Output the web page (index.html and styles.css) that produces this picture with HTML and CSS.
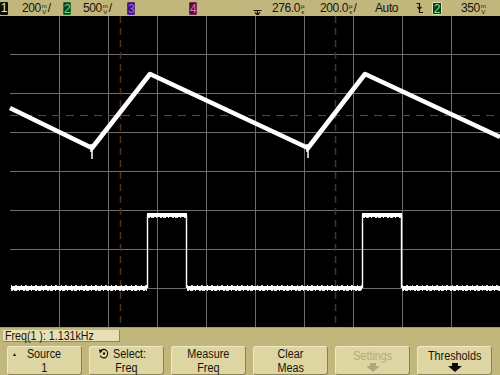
FILE: index.html
```html
<!DOCTYPE html>
<html>
<head>
<meta charset="utf-8">
<link rel="stylesheet" href="styles.css">
</head>
<body>
<div class="scope">
  <div class="topbar">
    <span class="cell"><span class="ch ch1">1</span></span>
    <span class="cell txt"><span class="sq">200</span><span class="unit"><i>m</i><i>V</i></span><span class="sq">/</span></span>
    <span class="cell"><span class="ch ch2">2</span></span>
    <span class="cell txt"><span class="sq">500</span><span class="unit"><i>m</i><i>V</i></span><span class="sq">/</span></span>
    <span class="cell"><span class="ch ch3">3</span></span>
    <span class="cell"><span class="ch ch4">4</span></span>
    <span class="cell">
      <svg class="ico trigpos" width="9" height="14" viewBox="0 0 9 14"><path d="M0.5 9.5 H8.5 M4.5 9.5 V14 M2 11.5 L4.5 14 L7 11.5" /></svg>
    </span>
    <span class="cell txt"><span class="sq">276.0</span><span class="unit"><i>µ</i><i>s</i></span></span>
    <span class="cell txt"><span class="sq">200.0</span><span class="unit"><i>µ</i><i>s</i></span><span class="sq">/</span></span>
    <span class="cell txt"><span class="sq">Auto</span></span>
    <span class="cell">
      <svg class="ico slope" width="8" height="12" viewBox="0 0 8 12"><path d="M0.5 1.5 H3.5 V10.5 H7 M1.5 5 L3.5 7 L5.5 5" /></svg>
    </span>
    <span class="cell"><span class="ch ch2b">2</span></span>
    <span class="cell txt"><span class="sq">350</span><span class="unit"><i>m</i><i>V</i></span></span>
  </div>

  <div class="screen">
    <svg width="500" height="312" viewBox="0 0 500 312">
      <g class="grid">
        <path d="M10 38.5 H500 M10 77.5 H500 M10 116.5 H500 M10 155.5 H500 M10 194.5 H500 M10 233.5 H500 M10 272.5 H500" />
        <path d="M59.5 0 V311 M108.5 0 V311 M157.5 0 V311 M206.5 0 V311 M255.5 0 V311 M304.5 0 V311 M353.5 0 V311 M402.5 0 V311 M451.5 0 V311" />
      </g>
      <path class="edge" d="M0 311.5 H500" />
      <path class="cursor-v" d="M120.5 0 V311 M335.5 0 V311" />
      <path class="cursor-h" d="M10 99.5 H500" />
      <path class="ch1trace" d="M10 92 L92 132 L150 58 L308 132 L365 58 L500 121" />
      <path class="spike" d="M92 131 V143 M308 131 V142 M91 128 V136 M307 128 V136" />
      <path class="ch2flat" d="M11 272 H147 M147 199 H187 M187 272 H362 M362 199 H402 M402 272 H500" />
      <path class="ch2edge" d="M147.5 199 V272 M186.5 199 V272 M362.5 199 V272 M401.5 199 V272" />
      <path class="ch2noise" d="M11 274.5 H147 M187 274.5 H362 M402 274.5 H500 M148 201.5 H187 M363 201.5 H402" />
      <path class="ch2noise2" d="M11 269.5 H147 M187 269.5 H362 M402 269.5 H500" />
    </svg>
  </div>

  <div class="softbar">
    <div class="readout"><span class="rq">Freq(1 ): 1.131kHz</span></div>
    <div class="keys">
      <div class="key">
        <span class="mark">&#9650;</span>
        <span class="kl">Source</span><span class="kl">1</span>
      </div>
      <div class="key">
        <span class="kl line1">
          <svg class="ico sel" width="12" height="11" viewBox="0 0 12 11"><path d="M2.2 3.2 A4.3 4.3 0 1 1 1.8 7.4" /><path class="fill" d="M0.2 1.2 L4.6 2.4 L1.4 5.4 Z" /><circle class="fill" cx="6" cy="5.5" r="1.3" /></svg>
          Select:</span><span class="kl">Freq</span>
      </div>
      <div class="key"><span class="kl">Measure</span><span class="kl">Freq</span></div>
      <div class="key"><span class="kl">Clear</span><span class="kl">Meas</span></div>
      <div class="key off"><span class="kl">Settings</span>
        <svg class="arrow" width="16" height="9" viewBox="0 0 16 9"><path d="M5 0 H11 V3 H15 L8 9 L1 3 H5 Z" /></svg>
      </div>
      <div class="key"><span class="kl">Thresholds</span>
        <svg class="arrow" width="16" height="9" viewBox="0 0 16 9"><path d="M5 0 H11 V3 H15 L8 9 L1 3 H5 Z" /></svg>
      </div>
    </div>
  </div>
</div>
</body>
</html>
```

FILE: styles.css
```css
html, body {
  margin: 0;
  padding: 0;
  background: #000;
}

.scope {
  width: 500px;
  height: 375px;
  display: flex;
  flex-direction: column;
  font-family: "Liberation Sans", Arial, sans-serif;
  color: #16140a;
  overflow: hidden;
}

.topbar {
  height: 16px;
  background: #c1b67c;
  display: grid;
  grid-template-columns: 22px 41px 20px 44px 62px 62px 21px 48px 55px 39px 18px 29px 39px;
  align-items: center;
  font-size: 13px;
  line-height: 14px;
}

.cell {
  display: flex;
  align-items: center;
  height: 16px;
  white-space: nowrap;
}

.sq {
  display: inline-block;
  white-space: nowrap;
  font-size: 12px;
  letter-spacing: -0.4px;
}

.ch {
  display: inline-block;
  width: 8px;
  height: 13px;
  font-size: 12px;
  line-height: 13px;
  text-align: center;
  border-radius: 1px;
  box-sizing: border-box;
}
.ch1 { background: #0c0c08; color: #e8e2b8; }
.ch2 { background: #123a1c; color: #5fe07a; border: 1px solid #2d6a36; }
.ch3 { background: #3c1466; color: #a66ae6; border: 1px solid #5a2a8a; }
.ch4 { background: #4c0f34; color: #e86ab6; border: 1px solid #7a2656; }
.ch2b {
  width: 10px;
  background: #0f3a18;
  color: #6cf088;
  border: 1px solid #e6e0b8;
}

.unit {
  display: inline-flex;
  flex-direction: column;
  font-size: 6px;
  line-height: 6px;
  margin: 1px 1px 0;
}
.unit i {
  font-style: normal;
  text-align: center;
  height: 6px;
}

.ico path, .ico circle {
  fill: none;
  stroke: #16140a;
  stroke-width: 1.2;
}
.ico .fill {
  fill: #16140a;
  stroke: none;
}
.trigpos { margin-left: 2px; }
.slope { margin-left: 2px; }

.screen {
  height: 312px;
  background: #000;
}
.screen svg { display: block; }

.grid path {
  fill: none;
  stroke: #6e6e6e;
  stroke-width: 1;
}
.edge {
  stroke: #9a9a9a;
  stroke-width: 1;
}
.cursor-v {
  stroke: #4c301c;
  stroke-width: 1.5;
  stroke-dasharray: 7 5;
  fill: none;
}
.cursor-h {
  stroke: #6e4028;
  stroke-width: 1;
  stroke-dasharray: 8 6;
  fill: none;
}
.ch1trace {
  fill: none;
  stroke: #fff;
  stroke-width: 4.6;
  stroke-linejoin: round;
  stroke-linecap: butt;
}
.spike {
  stroke: #fff;
  stroke-width: 1.5;
  fill: none;
}
.ch2flat {
  fill: none;
  stroke: #fff;
  stroke-width: 4;
}
.ch2edge {
  stroke: #fff;
  stroke-width: 1.4;
  fill: none;
}
.ch2noise {
  stroke: #e8e8e8;
  stroke-width: 1;
  stroke-dasharray: 2 1 3 2 1 3;
  fill: none;
}
.ch2noise2 {
  stroke: #d8d8d8;
  stroke-width: 1;
  stroke-dasharray: 1 3 2 4;
  fill: none;
}

.softbar {
  flex: 1;
  background: #c1b67c;
  padding-top: 2px;
}

.readout {
  margin-left: 3px;
  width: 117px;
  height: 12px;
  box-sizing: border-box;
  background: #e7e0b4;
  border-bottom: 1px solid #8e8658;
  border-right: 1px solid #8e8658;
  font-size: 13px;
  line-height: 11px;
  padding-left: 2px;
  white-space: nowrap;
}
.rq {
  display: inline-block;
  transform: scaleX(0.82);
  transform-origin: left center;
}

.keys {
  display: flex;
  gap: 7px;
  padding-left: 7px;
  margin-top: 4px;
}

.key {
  position: relative;
  width: 75px;
  height: 29px;
  box-sizing: border-box;
  background: #ddd5a2;
  border: 1px solid;
  border-color: #f0eac8 #8a8254 #8a8254 #f0eac8;
  border-radius: 3px;
  display: flex;
  flex-direction: column;
  align-items: center;
  justify-content: center;
  font-size: 12px;
  line-height: 14px;
}
.kl {
  display: inline-block;
  height: 14px;
  flex-shrink: 0;
  white-space: nowrap;
  transform: scaleX(0.9);
}
.key .line1 {
  display: flex;
  align-items: center;
  gap: 4px;
  margin-left: -8px;
}
.key .mark {
  position: absolute;
  left: 4px;
  top: 4px;
  font-size: 5px;
  line-height: 6px;
}
.key.off { color: #b4ab7c; }
.arrow { margin-top: 0; flex-shrink: 0; }
.arrow path { fill: #0c0c08; }
.key.off .arrow path { fill: #b0a880; }
```
